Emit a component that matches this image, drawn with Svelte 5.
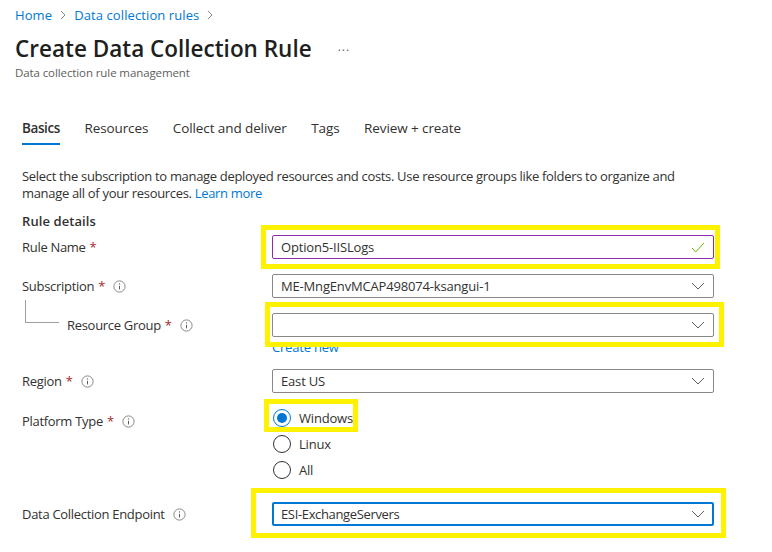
<script>
	const tabs = ['Basics', 'Resources', 'Collect and deliver', 'Tags', 'Review + create'];
</script>

{#snippet info()}
	<svg class="info" width="13" height="13" viewBox="0 0 13 13">
		<circle cx="6.5" cy="6.5" r="5.6" fill="none" stroke="#8a8886" />
		<path d="M6.5 5.8v3.6" stroke="#605e5c" fill="none" />
		<circle cx="6.5" cy="3.9" r=".7" fill="#605e5c" />
	</svg>
{/snippet}

{#snippet chevron()}
	<svg class="chev" width="14" height="8" viewBox="0 0 14 8">
		<path d="M1 1l6 6 6-6" fill="none" stroke="#605e5c" />
	</svg>
{/snippet}

{#snippet crumbSep()}
	<svg width="6" height="10" viewBox="0 0 6 10">
		<path d="M1 1l4 4-4 4" fill="none" stroke="#8a8886" />
	</svg>
{/snippet}

<div class="page">
	<nav class="crumbs">
		<a href="#home">Home</a>
		{@render crumbSep()}
		<a href="#rules">Data collection rules</a>
		{@render crumbSep()}
	</nav>

	<div class="heading">
		<h1>Create Data Collection Rule</h1>
		<span class="more">...</span>
	</div>
	<p class="sub">Data collection rule management</p>

	<div class="tabs">
		{#each tabs as tab, i}
			<span class="tab" class:active={i === 0}>{tab}</span>
		{/each}
	</div>

	<p class="intro">
		Select the subscription to manage deployed resources and costs. Use resource groups like folders to organize and
		manage all of your resources. <a href="#learn">Learn more</a>
	</p>

	<h2>Rule details</h2>

	<div class="form">
		<label>Rule Name <b>*</b></label>
		<div class="input purple hl hl-name">
			<span>Option5-IISLogs</span>
			<svg width="14" height="11" viewBox="0 0 14 11"><path d="M1 6l3.6 4L13 1" fill="none" stroke="#6bb700" /></svg>
		</div>

		<label>Subscription <b>*</b> {@render info()}</label>
		<div class="input"><span>ME-MngEnvMCAP498074-ksangui-1</span>{@render chevron()}</div>

		<label class="child"><i class="tree"></i>Resource Group <b>*</b> {@render info()}</label>
		<div class="stack">
			<div class="input hl hl-group">{@render chevron()}</div>
			<a class="create" href="#new">Create new</a>
		</div>

		<label>Region <b>*</b> {@render info()}</label>
		<div class="input"><span>East US</span>{@render chevron()}</div>

		<label class="top">Platform Type <b>*</b> {@render info()}</label>
		<div class="radios">
			<div class="radio on hl hl-radio"><i></i>Windows</div>
			<div class="radio"><i></i>Linux</div>
			<div class="radio"><i></i>All</div>
		</div>

		<label>Data Collection Endpoint {@render info()}</label>
		<div class="input focus hl hl-end"><span>ESI-ExchangeServers</span>{@render chevron()}</div>
	</div>
</div>

<style>
	:global(body) {
		background: #fff;
		font-family: "Open Sans", "Noto Sans", sans-serif;
		font-size: 13px;
		color: #323130;
		letter-spacing: -0.2px;
	}

	.page {
		width: 772px;
		height: 552px;
		overflow: hidden;
		box-sizing: border-box;
		padding-top: 6px;
	}

	a {
		color: #0078d4;
		text-decoration: none;
	}

	.crumbs {
		display: flex;
		align-items: center;
		gap: 8px;
		height: 18px;
		padding-left: 15px;
		letter-spacing: 0.1px;
	}

	.heading {
		display: flex;
		align-items: center;
		gap: 26px;
		margin: 9px 0 0 15px;
		height: 30px;
	}

	h1 {
		margin: 0;
		font-size: 22.5px;
		font-weight: 600;
		letter-spacing: 0;
		color: #201f1e;
	}

	.more {
		font-size: 12px;
		color: #605e5c;
		letter-spacing: 1px;
		margin-top: -3px;
	}

	.sub {
		margin: 2px 0 0 15px;
		font-size: 11.5px;
		line-height: 16px;
		color: #605e5c;
		letter-spacing: -0.1px;
	}

	.tabs {
		display: flex;
		gap: 24.5px;
		margin: 38px 0 0 22px;
		height: 28px;
		align-items: flex-start;
		line-height: 18px;
		font-size: 13.5px;
		letter-spacing: -0.1px;
	}

	.tab {
		height: 24px;
	}

	.tab.active {
		font-weight: 600;
		letter-spacing: -0.4px;
		border-bottom: 2px solid #0078d4;
	}

	.intro {
		margin: 21px 85px 0 22px;
		line-height: 17px;
		letter-spacing: -0.32px;
	}

	h2 {
		margin: 11px 0 0 22px;
		font-size: 13px;
		font-weight: 600;
		line-height: 17px;
		letter-spacing: 0.08px;
	}

	.form {
		display: grid;
		grid-template-columns: 250px 442px;
		row-gap: 15px;
		margin: 5px 0 0 22px;
		align-items: start;
	}

	label {
		display: flex;
		align-items: center;
		gap: 4px;
		height: 24px;
		position: relative;
		letter-spacing: -0.3px;
	}

	label b {
		font-weight: 400;
		color: #a4262c;
	}

	.info {
		margin-left: 4px;
	}

	.child {
		padding-left: 45px;
	}

	.top {
		margin-top: 1px;
	}

	.tree {
		position: absolute;
		left: 3px;
		top: -13px;
		width: 33px;
		height: 22px;
		border-left: 1px solid #a19f9d;
		border-bottom: 1px solid #a19f9d;
	}

	.input {
		box-sizing: border-box;
		display: flex;
		align-items: center;
		justify-content: space-between;
		height: 24px;
		padding: 0 8px;
		border: 1px solid #8a8886;
		border-radius: 2px;
		position: relative;
		letter-spacing: -0.17px;
	}

	.input.purple {
		border-color: #8e2bb0;
	}

	.input.focus {
		border: 2px solid #0078d4;
		padding: 0 7px;
		letter-spacing: -0.35px;
	}

	.chev {
		margin-left: auto;
	}

	.create {
		display: block;
		line-height: 17px;
		margin-top: 2px;
		height: 15px;
	}

	.radios {
		display: flex;
		flex-direction: column;
		align-items: flex-start;
		gap: 6px;
		margin-bottom: 7px;
	}

	.radio {
		display: flex;
		align-items: center;
		gap: 8px;
		height: 20px;
		position: relative;
	}

	.radio i {
		box-sizing: border-box;
		width: 18px;
		height: 18px;
		margin-left: 1px;
		border: 1px solid #323130;
		border-radius: 50%;
		position: relative;
	}

	.radio.on i {
		border-color: #0078d4;
	}

	.radio.on i::after {
		content: "";
		position: absolute;
		inset: 3px;
		background: #0078d4;
		border-radius: 50%;
	}

	.hl::after {
		content: "";
		position: absolute;
		border: 5px solid #fff200;
		z-index: 2;
		pointer-events: none;
	}

	.hl-name::after {
		inset: -11px -7px -11px -12px;
	}

	.hl-group::after {
		inset: -12px -11px -11px -8px;
	}

	.hl-radio::after {
		inset: -9px -5px -4px -8px;
	}

	.hl-end::after {
		inset: -16px -14px -14px -23px;
	}
</style>
